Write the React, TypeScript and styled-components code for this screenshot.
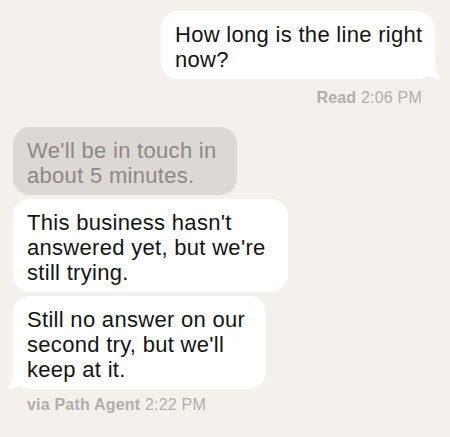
import styled, { createGlobalStyle } from "styled-components";

// Colors
const Colors = {
  page: "#f4f0ec",
  white: "#ffffff",
  pending: "#dcd8d3",
  pendingText: "#8d8985",
  text: "#141414",
  meta: "#b2aeaa",
};

type Side = "left" | "right";

const Tail = ({ side, color }: { side: Side; color: string }) => (
  <TailSvg $side={side} width="12" height="20" viewBox="0 0 12 20">
    <path d="M0 0 H6 C6 10 8 16 12 20 C7 20 3 18.6 0 16.5 Z" fill={color} />
  </TailSvg>
);

export default function App() {
  return (
    <>
      <GlobalStyle />
      <Thread>
        <Bubble $side="right" $width={274}>
          How long is the line right
          <br />
          now?
          <Tail side="right" color={Colors.white} />
        </Bubble>
        <Meta $side="right">
          <b>Read</b> 2:06 PM
        </Meta>

        <Group>
          <Bubble $side="left" $width={224} $pending>
            We'll be in touch in
            <br />
            about 5 minutes.
          </Bubble>
          <Bubble $side="left" $width={275}>
            This business hasn't
            <br />
            answered yet, but we're
            <br />
            still trying.
          </Bubble>
          <Bubble $side="left" $width={253}>
            Still no answer on our
            <br />
            second try, but we'll
            <br />
            keep at it.
            <Tail side="left" color={Colors.white} />
          </Bubble>
        </Group>
        <Meta $side="left">
          <b>via Path Agent</b> 2:22 PM
        </Meta>
      </Thread>
    </>
  );
}

//>>>>StyledComponents<<<<\\

const GlobalStyle = createGlobalStyle`
  html, body {
    margin: 0;
    padding: 0;
    background: ${Colors.page};
  }
  body {
    font-family: "Liberation Sans", Arial, Helvetica, sans-serif;
    -webkit-font-smoothing: antialiased;
  }
`;

const Thread = styled.div`
  display: flex;
  flex-direction: column;
  width: 450px;
  height: 437px;
  box-sizing: border-box;
  padding: 11px 15px 0 13px;
  background: ${Colors.page};
`;

const Group = styled.div`
  display: flex;
  flex-direction: column;
  gap: 4px;
  margin-top: 19px;
`;

const Bubble = styled.div<{ $side: Side; $width: number; $pending?: boolean }>`
  position: relative;
  align-self: ${({ $side }) => ($side === "right" ? "flex-end" : "flex-start")};
  width: ${({ $width }) => $width}px;
  box-sizing: border-box;
  padding: 11px 14px 7px;
  border-radius: 17px;
  background: ${({ $pending }) => ($pending ? Colors.pending : Colors.white)};
  color: ${({ $pending }) => ($pending ? Colors.pendingText : Colors.text)};
  font-size: 22px;
  line-height: 25px;
  letter-spacing: 0.3px;
  white-space: nowrap;
`;

const TailSvg = styled.svg<{ $side: Side }>`
  position: absolute;
  bottom: 0;
  ${({ $side }) =>
    $side === "right"
      ? "right: -6px;"
      : "left: -6px; transform: scaleX(-1);"}
`;

const Meta = styled.div<{ $side: Side }>`
  align-self: ${({ $side }) => ($side === "right" ? "flex-end" : "flex-start")};
  margin-top: ${({ $side }) => ($side === "right" ? "9px" : "6px")};
  padding: ${({ $side }) => ($side === "right" ? "0 13px 0 0" : "0 0 0 14px")};
  color: ${Colors.meta};
  font-size: 16px;
  line-height: 20px;
  letter-spacing: 0.2px;

  b {
    font-weight: 700;
  }
`;
